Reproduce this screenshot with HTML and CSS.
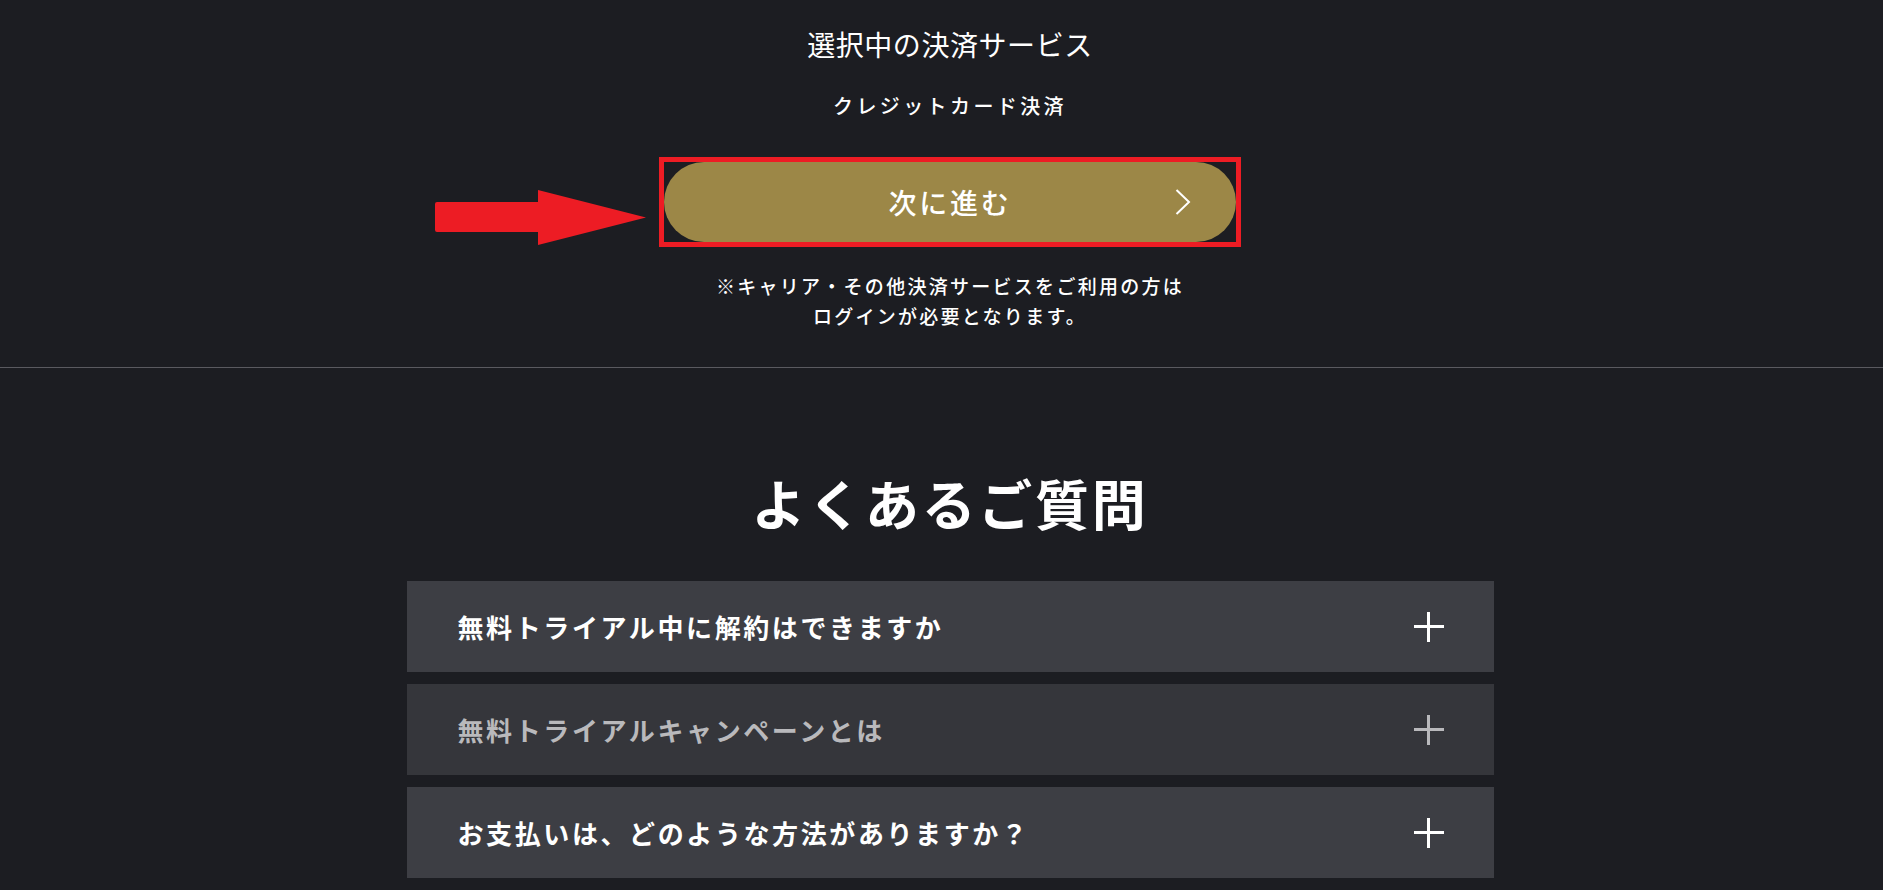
FILE: index.html
```html
<!DOCTYPE html>
<html lang="ja">
<head>
  <meta charset="UTF-8">
  <title>決済サービスの選択</title>
  <link rel="stylesheet" href="styles.css">
</head>
<body>
  <section class="payment">
    <h2 class="payment-title">選択中の決済サービス</h2>
    <p class="payment-method">クレジットカード決済</p>

    <div class="next-wrap">
      <svg class="pointer" width="212" height="56" viewBox="0 0 212 56">
        <path d="M2 12 L103 12 L103 0 L211 27.5 L103 55 L103 42 L2 42 Q0 42 0 40 L0 14 Q0 12 2 12 Z" fill="#ed1c24"/>
      </svg>
      <div class="highlight">
        <button class="next-btn">
          次に進む
          <svg class="chevron" width="16" height="26" viewBox="0 0 16 26">
            <path d="M1.5 1 L14 13 L1.5 25" fill="none" stroke="#fff" stroke-width="2"/>
          </svg>
        </button>
      </div>
    </div>

    <p class="payment-note">※キャリア・その他決済サービスをご利用の方は<br>ログインが必要となります。</p>
  </section>

  <section class="faq">
    <h2 class="faq-title">よくあるご質問</h2>
    <div class="faq-list">
      <div class="faq-item">
        <span>無料トライアル中に解約はできますか</span>
        <span class="plus"></span>
      </div>
      <div class="faq-item dim">
        <span>無料トライアルキャンペーンとは</span>
        <span class="plus"></span>
      </div>
      <div class="faq-item">
        <span>お支払いは、どのような方法がありますか？</span>
        <span class="plus"></span>
      </div>
    </div>
  </section>
</body>
</html>
```

FILE: styles.css
```css
body {
  margin: 0;
  background: #1c1d22;
  font-family: 'Noto Sans CJK JP', 'Noto Sans', sans-serif;
  color: #fff;
  overflow: hidden;
}

.payment {
  padding: 23px 0 36px 17px;
  text-align: center;
  border-bottom: 1px solid #5a5a60;
}

.payment-title {
  margin: 0;
  font-size: 28px;
  font-weight: 400;
  line-height: 42px;
  letter-spacing: 0.02em;
}

.payment-method {
  margin: 26px 0 0;
  font-size: 20px;
  font-weight: 500;
  line-height: 30px;
  letter-spacing: 0.17em;
}

.next-wrap {
  position: relative;
  width: 582px;
  margin: 36px auto 0;
}

.pointer {
  position: absolute;
  right: calc(100% + 12px);
  top: 33px;
}

.highlight {
  border: 5px solid #ed1c24;
  display: flex;
}

.next-btn {
  position: relative;
  width: 572px;
  height: 80px;
  border: none;
  border-radius: 40px;
  background: #9c8747;
  color: #fff;
  font-family: inherit;
  font-size: 28px;
  font-weight: 500;
  letter-spacing: 0.1em;
  cursor: pointer;
}

.chevron {
  position: absolute;
  right: 45px;
  top: 27px;
}

.payment-note {
  margin: 24px 0 0;
  font-size: 19px;
  font-weight: 500;
  line-height: 30px;
  letter-spacing: 0.12em;
}

.faq {
  padding: 97px 0 0 17px;
}

.faq-title {
  margin: 0;
  text-align: center;
  font-size: 54px;
  font-weight: 700;
  line-height: 76px;
  letter-spacing: 0.05em;
}

.faq-list {
  width: 1087px;
  margin: 40px auto 0;
  display: flex;
  flex-direction: column;
  gap: 12px;
}

.faq-item {
  height: 91px;
  background: #3d3e44;
  display: flex;
  align-items: center;
  justify-content: space-between;
  padding: 0 50px 0 51px;
  font-size: 26px;
  font-weight: 700;
  letter-spacing: 0.1em;
}

.faq-item.dim {
  background: #35363b;
  color: #b9b9bc;
}

.plus {
  position: relative;
  width: 30px;
  height: 30px;
}

.plus::before,
.plus::after {
  content: "";
  position: absolute;
  background: currentColor;
}

.plus::before {
  left: 0;
  top: 13px;
  width: 30px;
  height: 3px;
}

.plus::after {
  left: 13px;
  top: 0;
  width: 3px;
  height: 30px;
}
```
